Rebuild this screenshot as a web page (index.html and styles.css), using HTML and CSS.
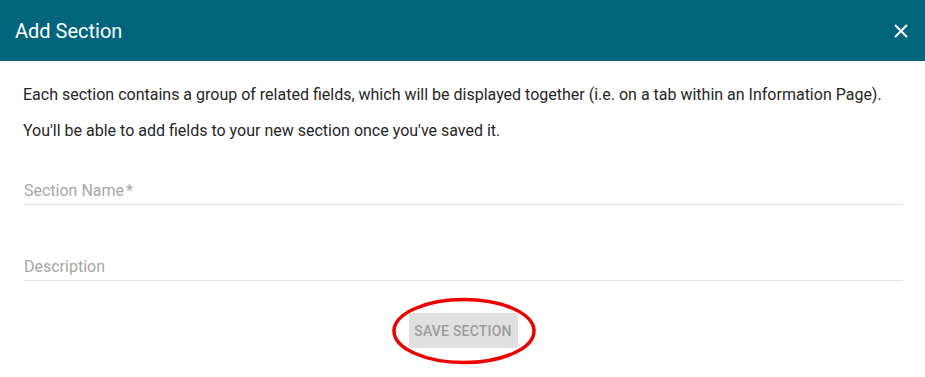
FILE: index.html
```html
<!DOCTYPE html>
<html lang="en">
<head>
<meta charset="utf-8">
<title>Add Section</title>
<link rel="stylesheet" href="styles.css">
</head>
<body>
<div class="dialog">
  <header class="dialog-header">
    <h1 class="dialog-title">Add Section</h1>
    <button class="close-btn" aria-label="Close">
      <svg width="14" height="14" viewBox="0 0 14 14"><path d="M1 1 L13 13 M13 1 L1 13" stroke="#fff" stroke-width="2" fill="none"/></svg>
    </button>
  </header>
  <div class="dialog-body">
    <p class="intro">Each section contains a group of related fields, which will be displayed together (i.e. on a tab within an Information Page).</p>
    <p class="intro">You'll be able to add fields to your new section once you've saved it.</p>
    <div class="field field-first">
      <span class="field-label">Section Name<span class="req">*</span></span>
    </div>
    <div class="field">
      <span class="field-label">Description</span>
    </div>
    <div class="actions">
      <div class="btn-wrap">
        <button class="save-btn">SAVE SECTION</button>
        <svg class="highlight" width="146" height="68" viewBox="0 0 146 68"><ellipse cx="73" cy="34" rx="70" ry="31.5" fill="none" stroke="#ee0000" stroke-width="3.5"/></svg>
      </div>
    </div>
  </div>
</div>
</body>
</html>
```

FILE: styles.css
```css
* { box-sizing: border-box; }
html, body { margin: 0; padding: 0; background: #fff; }
body { font-family: Roboto, "Liberation Sans", Arial, sans-serif; width: 925px; height: 377px; overflow: hidden; }

.dialog-header {
  height: 61px;
  background: #00657c;
  display: flex;
  align-items: center;
  justify-content: space-between;
  padding: 0 17px 0 15px;
}
.dialog-title {
  margin: 0;
  color: #fff;
  font-size: 20px;
  font-weight: 400;
  line-height: 1;
  padding-top: 1px;
}
.close-btn {
  background: none;
  border: 0;
  padding: 0;
  display: flex;
  cursor: pointer;
  margin-top: 1px;
}

.dialog-body { padding: 23px 22px 0 23px; }
.intro {
  margin: 0 0 14px;
  font-size: 16px;
  line-height: 22px;
  color: #262626;
}

.field {
  height: 30px;
  border-bottom: 1px solid #e3e3e3;
  margin-left: 1px;
  display: flex;
  align-items: flex-end;
  padding-bottom: 4px;
}
.field-first { margin-top: 33px; }
.field + .field { margin-top: 46px; }
.field-label {
  font-size: 16px;
  color: #a6a6a6;
  line-height: 18px;
}
.req { margin-left: 2px; }

.actions {
  display: flex;
  justify-content: center;
  margin-top: 32px;
}
.btn-wrap { position: relative; }
.save-btn {
  height: 35px;
  width: 109px;
  background: #e0e0e0;
  border: 0;
  border-radius: 2px;
  color: #9b9b9b;
  font-family: Roboto, "Liberation Sans", Arial, sans-serif;
  font-size: 14px;
  font-weight: 500;
  letter-spacing: 0.2px;
  padding: 0;
}
.highlight {
  position: absolute;
  left: -18px;
  top: -16px;
  pointer-events: none;
}
```
